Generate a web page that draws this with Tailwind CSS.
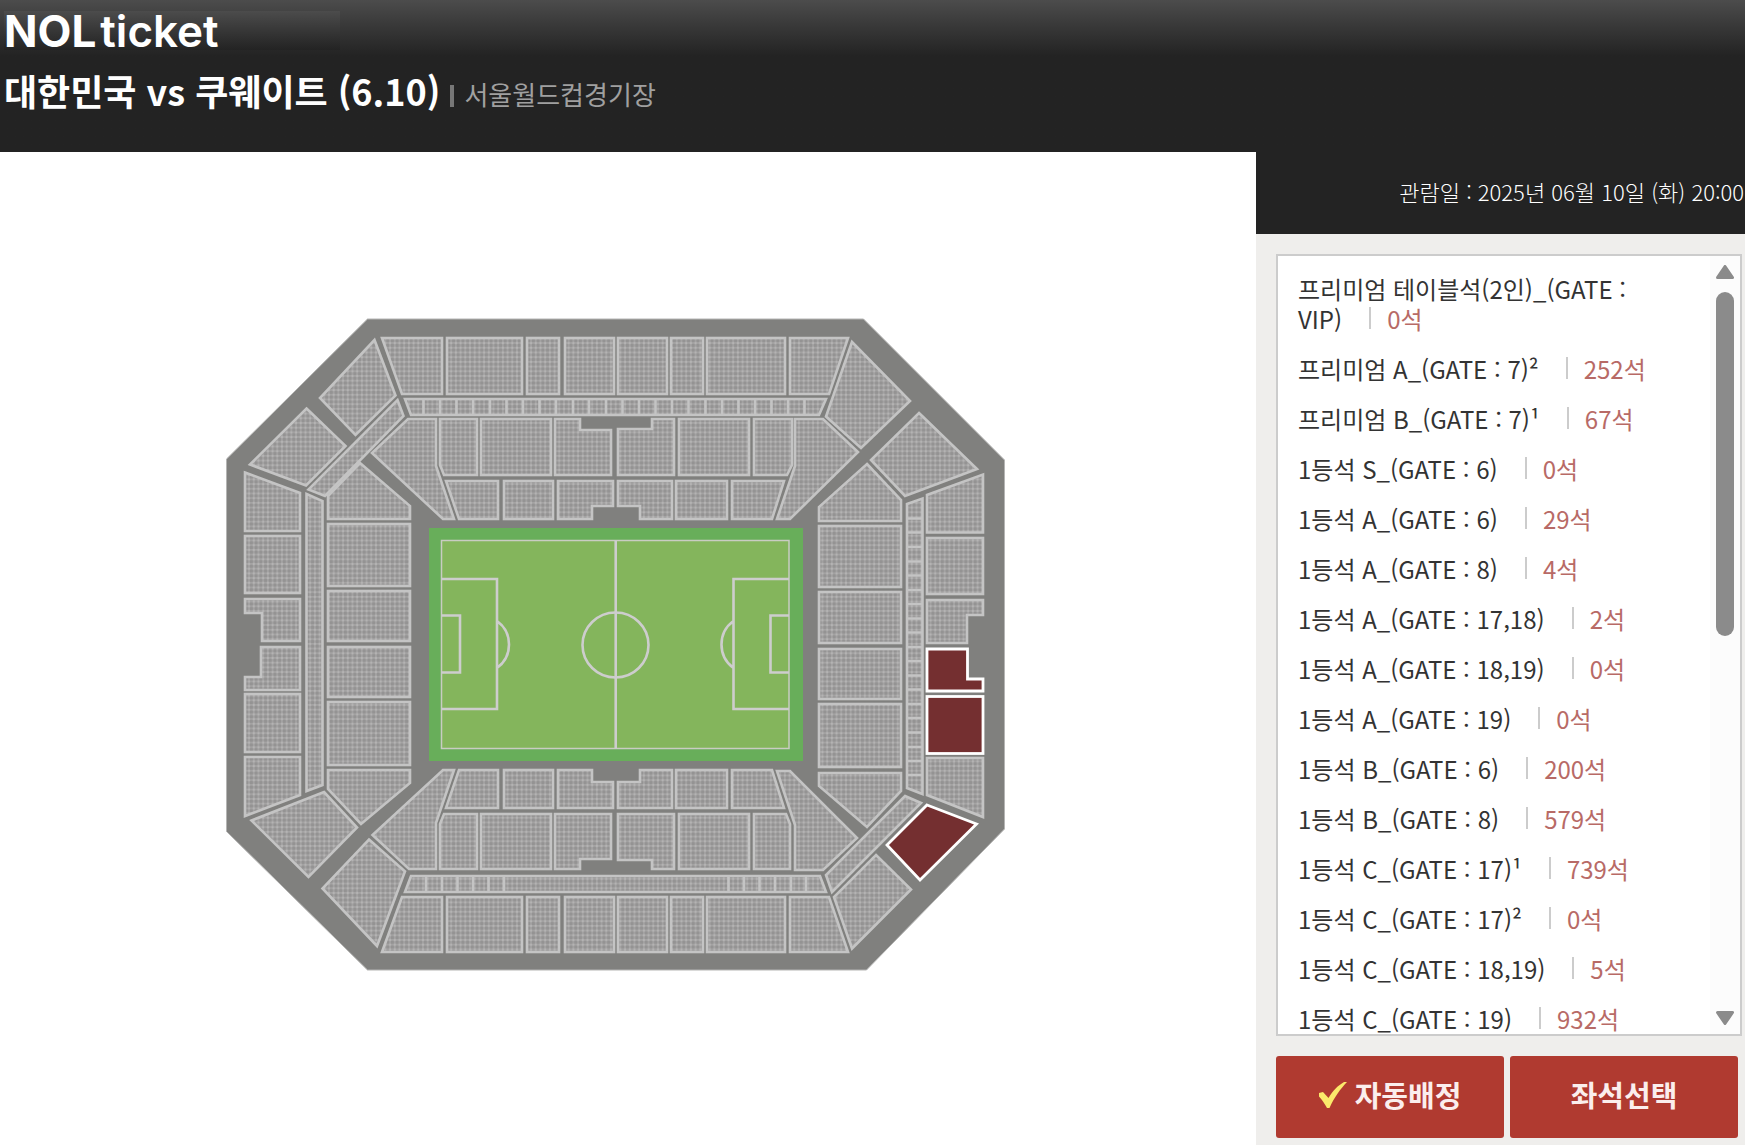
<!DOCTYPE html>
<html lang="ko">
<head>
    <meta charset="UTF-8">
    <meta name="viewport" content="width=device-width, initial-scale=1.0">
    <title>NOL ticket - 좌석 선택</title>
    <script src="https://cdn.jsdelivr.net/npm/@tailwindcss/browser@4"></script>
</head>
<body class="flex h-screen flex-col overflow-hidden bg-white font-['Noto_Sans_CJK_KR',sans-serif]">
    <header class="h-[152px] shrink-0 bg-[#232323] bg-linear-to-b from-[#4c4c4c] to-[#232323] to-[56px] px-1 pt-[11px] text-white">
        <a href="#" class="flex h-[39px] w-[336px] items-center gap-1 bg-linear-to-b from-[#4c4c4c] to-[#232323] font-['Inter',sans-serif] text-[44px] leading-none">
            <span class="font-bold">NOL</span><span class="font-semibold">ticket</span>
        </a>
        <div class="mt-[14px] flex items-center">
            <h1 class="text-[36px] leading-[52px] font-bold">대한민국 vs 쿠웨이트 (6.10)</h1>
            <span class="mt-3 ml-[10px] h-[22px] w-1 bg-[#777]"></span>
            <p class="mt-2 ml-[10px] text-[26px] leading-[40px] text-[#a0a0a0]">서울월드컵경기장</p>
        </div>
    </header>

    <div class="flex min-h-0 flex-1">
        <main class="min-w-0 flex-1">
            <svg class="h-full w-full" viewBox="0 152 1256 993" role="img" aria-label="서울월드컵경기장 좌석 배치도">
                <defs>
                    <pattern id="seats" width="4.7" height="4.7" patternUnits="userSpaceOnUse">
                        <rect width="4.7" height="4.7" fill="#a4a3a3" />
                        <rect x="0.8" y="0.8" width="3" height="3" rx="0.8" fill="#949393" />
                        <circle cx="0" cy="0" r="1.2" fill="#b4b3b3" />
                        <circle cx="4.7" cy="0" r="1.2" fill="#b4b3b3" />
                        <circle cx="0" cy="4.7" r="1.2" fill="#b4b3b3" />
                        <circle cx="4.7" cy="4.7" r="1.2" fill="#b4b3b3" />
                    </pattern>
                </defs>

                <polygon points="367.5,319 863.5,319 1004.5,460 1004.5,829 866.5,970 367.5,970 226.5,831.5 226.5,459" fill="#80807e" stroke="#b5b5b4" />

                <g fill="url(#seats)" stroke="#c4c4c4" stroke-width="2.6">
                    <!-- north stand, upper tier -->
                    <polygon points="382,338 442,338 442,394 402,394" />
                    <rect x="447" y="338" width="75" height="56" />
                    <rect x="527" y="338" width="32" height="56" />
                    <rect x="565" y="338" width="49" height="56" />
                    <rect x="618" y="338" width="49" height="56" />
                    <rect x="671" y="338" width="32" height="56" />
                    <rect x="707" y="338" width="78" height="56" />
                    <polygon points="790,338 848,338 829,394 790,394" />
                    <polygon points="405,399 826,399 819,415 411,415" />
                    <path d="M423.5 399v16M440 399v16M456.5 399v16M473 399v16M490 399v16M506.5 399v16M523 399v16M539.5 399v16M556 399v16M573 399v16M589 399v16M606 399v16M622.5 399v16M639 399v16M655.5 399v16M672 399v16M688.5 399v16M705.5 399v16M722 399v16M738.5 399v16M755 399v16M771.5 399v16M788 399v16M804.5 399v16" />

                    <!-- north stand, lower tier -->
                    <polygon points="408,419 436,419 436,466 454,519 443,519 372,453" />
                    <polygon points="440,419 477,419 477,475 444,475 440,465" />
                    <rect x="481" y="419" width="70" height="56" />
                    <polygon points="555,419 580,419 580,430 611,430 611,475 555,475" />
                    <polygon points="618,429 652,429 652,419 674,419 674,475 618,475" />
                    <rect x="679" y="419" width="70" height="56" />
                    <polygon points="754,419 792,419 792,465 787,475 754,475" />
                    <polygon points="795,419 823,419 858,452 790,519 777,519 795,466" />
                    <polygon points="446,481 498,481 498,519 459,519" />
                    <rect x="504" y="481" width="49" height="38" />
                    <polygon points="558,481 613,481 613,506 592,506 592,519 558,519" />
                    <polygon points="618,481 672,481 672,519 640,519 640,506 618,506" />
                    <rect x="676" y="481" width="51" height="38" />
                    <polygon points="732,481 784,481 772,519 732,519" />

                    <!-- west stand -->
                    <polygon points="374.5,340 395.5,395.5 355.5,435 320,398" />
                    <polygon points="306.5,408.5 345.5,446 306,485.5 250,464.5" />
                    <polygon points="397.5,400 403.5,416 325,496 308.5,489.5" />
                    <polygon points="360,463 410,506 410,519 328,519 328,496" />
                    <polygon points="245,472.5 300,493 300,531 245,531" />
                    <rect x="245" y="536" width="55" height="57" />
                    <polygon points="245,599 300,599 300,641 262,641 262,613 245,613" />
                    <polygon points="261,647 300,647 300,690 245,690 245,677 261,677" />
                    <rect x="245" y="694" width="55" height="58" />
                    <polygon points="245,757 300,757 300,795 245,816" />
                    <polygon points="306.5,494 322.5,501 322.5,785 306.5,791" />
                    <rect x="328" y="524" width="82" height="62" />
                    <rect x="328" y="591" width="82" height="50" />
                    <rect x="328" y="647" width="82" height="50" />
                    <rect x="328" y="702" width="82" height="63" />
                    <polygon points="328,770 410,770 410,783 361,824 328,789" />
                    <polygon points="324,792 357,827.5 308.5,877 251.5,820.5" />
                    <polygon points="369,839.5 405,871.5 377,946 322.5,888.5" />

                    <!-- south stand, lower tier -->
                    <polygon points="443,770 454,770 436,823 436,869 409,869 372.5,835" />
                    <polygon points="459,770 498,770 498,808 446,808" />
                    <rect x="504" y="770" width="49" height="38" />
                    <polygon points="558,770 592,770 592,782 613,782 613,808 558,808" />
                    <polygon points="640,770 672,770 672,808 618,808 618,782 640,782" />
                    <rect x="676" y="770" width="51" height="38" />
                    <polygon points="732,770 772,770 784,808 732,808" />
                    <polygon points="444,814 477,814 477,869 440,869 440,824" />
                    <rect x="481" y="814" width="70" height="55" />
                    <polygon points="555,814 611,814 611,859 580,859 580,869 555,869" />
                    <polygon points="618,814 674,814 674,869 652,869 652,860 618,860" />
                    <rect x="679" y="814" width="70" height="55" />
                    <polygon points="754,814 786,814 790,824 790,869 754,869" />
                    <polygon points="777,771 790,771 857,838 823,870 795,870 795,825" />

                    <!-- south stand, upper tier -->
                    <polygon points="411,876 820,876 826,892 405,892" />
                    <path d="M426 876v16M442 876v16M457.5 876v16M473 876v16M488.5 876v16M504 876v16M728.5 876v16M744 876v16M759.5 876v16M775 876v16M791 876v16M806 876v16" />
                    <polygon points="402,897 442,897 442,952 382,952" />
                    <rect x="447" y="897" width="75" height="55" />
                    <rect x="527" y="897" width="32" height="55" />
                    <rect x="565" y="897" width="49" height="55" />
                    <rect x="618" y="897" width="49" height="55" />
                    <rect x="671" y="897" width="32" height="55" />
                    <rect x="707" y="897" width="78" height="55" />
                    <polygon points="790,897 829,897 848,952 790,952" />

                    <!-- east stand -->
                    <polygon points="852,342 910,401 861,448 826,416.5" />
                    <polygon points="919,413 977,469 905,496 871,460" />
                    <polygon points="867,464 901,500 901,521 819,521 819,507" />
                    <rect x="819" y="526" width="82" height="61" />
                    <rect x="819" y="592" width="82" height="51" />
                    <rect x="819" y="649" width="82" height="50" />
                    <rect x="819" y="704" width="82" height="63" />
                    <polygon points="819,773 901,773 901,791 867,827 819,786" />
                    <polygon points="907,504 922.5,498.5 922.5,794 907,788" />
                    <path d="M907 518.5h15M907 532.5h15M907 547h15M907 561.5h15M907 575.5h15M907 590h15M907 604h15M907 618.5h15M907 632.5h15M907 647h15M907 661h15M907 675.5h15M907 689.5h15M907 704h15M907 718h15M907 732.5h15M907 747h15M907 761h15M907 775h15" />
                    <polygon points="983,474.5 983,532.5 927,532.5 927,495" />
                    <rect x="927" y="538" width="56" height="56" />
                    <polygon points="927,600 983,600 983,615 967,615 967,643 927,643" />
                    <polygon points="927,758 983,758 983,817 927,795" />
                    <polygon points="905,796 921,803 832,892 826,875" />
                    <polygon points="876,855 911,889.5 852,948.5 834,897" />
                </g>

                <!-- zones that can be booked -->
                <g fill="#742f30" stroke="#fff" stroke-width="2.8">
                    <polygon points="927,649 967.5,649 967.5,679 983,679 983,691 927,691" />
                    <rect x="927" y="696.5" width="56" height="57" />
                    <polygon points="927,805 976.5,824 920,880 887,845" />
                </g>

                <!-- pitch -->
                <rect x="429" y="528" width="374" height="233" fill="#68ae5a" />
                <rect x="441.5" y="540.5" width="347.5" height="208" fill="#84b55c" stroke="#c9ccc2" stroke-width="1.5" />
                <g fill="none" stroke="#cdcdcd" stroke-width="2.6">
                    <path d="M615.7 540.5v208" />
                    <ellipse cx="615.5" cy="645" rx="33" ry="32.5" />
                    <path d="M441.5 579h55.500v130h-55.500M441.5 615.500h18.500v57h-18.500M497 621a29 29 0 0 1 0 47" />
                    <path d="M789 579h-55.500v130h55.500M789 615.500h-18.500v57h18.500M733.500 621a29 29 0 0 0 0 47" />
                </g>
            </svg>
        </main>

        <aside class="flex w-[489px] shrink-0 flex-col bg-[#efeeec]">
            <p class="h-[82px] shrink-0 bg-[#232323] pr-px text-right text-[22px] leading-[78px] font-light text-white">관람일 : 2025년 06월 10일 (화) 20:00</p>

            <div class="mt-5 mr-[3px] ml-5 flex min-h-0 flex-1 border-2 border-[#ccc] bg-white">
                <ul id="seat-list" class="min-w-0 flex-1 space-y-5 overflow-y-auto pt-[18px] pr-[50px] pl-5 text-[24px] leading-[30px] text-[#333] [scrollbar-width:none]">
                    <li><a href="#">프리미엄 테이블석(2인)_(GATE : VIP)<span class="mr-4 ml-[27px] inline-block h-[22px] w-0.5 bg-[#ccc]"></span><span class="text-[#b86a66]">0석</span></a></li>
                    <li><a href="#">프리미엄 A_(GATE : 7)²<span class="mr-4 ml-[27px] inline-block h-[22px] w-0.5 bg-[#ccc]"></span><span class="text-[#b86a66]">252석</span></a></li>
                    <li><a href="#">프리미엄 B_(GATE : 7)¹<span class="mr-4 ml-[27px] inline-block h-[22px] w-0.5 bg-[#ccc]"></span><span class="text-[#b86a66]">67석</span></a></li>
                    <li><a href="#">1등석 S_(GATE : 6)<span class="mr-4 ml-[27px] inline-block h-[22px] w-0.5 bg-[#ccc]"></span><span class="text-[#b86a66]">0석</span></a></li>
                    <li><a href="#">1등석 A_(GATE : 6)<span class="mr-4 ml-[27px] inline-block h-[22px] w-0.5 bg-[#ccc]"></span><span class="text-[#b86a66]">29석</span></a></li>
                    <li><a href="#">1등석 A_(GATE : 8)<span class="mr-4 ml-[27px] inline-block h-[22px] w-0.5 bg-[#ccc]"></span><span class="text-[#b86a66]">4석</span></a></li>
                    <li><a href="#">1등석 A_(GATE : 17,18)<span class="mr-4 ml-[27px] inline-block h-[22px] w-0.5 bg-[#ccc]"></span><span class="text-[#b86a66]">2석</span></a></li>
                    <li><a href="#">1등석 A_(GATE : 18,19)<span class="mr-4 ml-[27px] inline-block h-[22px] w-0.5 bg-[#ccc]"></span><span class="text-[#b86a66]">0석</span></a></li>
                    <li><a href="#">1등석 A_(GATE : 19)<span class="mr-4 ml-[27px] inline-block h-[22px] w-0.5 bg-[#ccc]"></span><span class="text-[#b86a66]">0석</span></a></li>
                    <li><a href="#">1등석 B_(GATE : 6)<span class="mr-4 ml-[27px] inline-block h-[22px] w-0.5 bg-[#ccc]"></span><span class="text-[#b86a66]">200석</span></a></li>
                    <li><a href="#">1등석 B_(GATE : 8)<span class="mr-4 ml-[27px] inline-block h-[22px] w-0.5 bg-[#ccc]"></span><span class="text-[#b86a66]">579석</span></a></li>
                    <li><a href="#">1등석 C_(GATE : 17)¹<span class="mr-4 ml-[27px] inline-block h-[22px] w-0.5 bg-[#ccc]"></span><span class="text-[#b86a66]">739석</span></a></li>
                    <li><a href="#">1등석 C_(GATE : 17)²<span class="mr-4 ml-[27px] inline-block h-[22px] w-0.5 bg-[#ccc]"></span><span class="text-[#b86a66]">0석</span></a></li>
                    <li><a href="#">1등석 C_(GATE : 18,19)<span class="mr-4 ml-[27px] inline-block h-[22px] w-0.5 bg-[#ccc]"></span><span class="text-[#b86a66]">5석</span></a></li>
                    <li><a href="#">1등석 C_(GATE : 19)<span class="mr-4 ml-[27px] inline-block h-[22px] w-0.5 bg-[#ccc]"></span><span class="text-[#b86a66]">932석</span></a></li>
                </ul>
                <div class="flex w-[30px] shrink-0 flex-col items-center bg-[#fcfcfc] py-[9px]">
                    <svg class="h-[14px] w-[18px]" viewBox="0 0 18 14" fill="#8b8b8b" stroke="#8b8b8b" stroke-width="3" stroke-linejoin="round"><path d="M9 1.500L16.500 12.500H1.500z" /></svg>
                    <div class="mt-[13px] h-[344px] w-[18px] rounded-full bg-[#8b8b8b]"></div>
                    <svg class="mt-auto h-[14px] w-[18px]" viewBox="0 0 18 14" fill="#8b8b8b" stroke="#8b8b8b" stroke-width="3" stroke-linejoin="round"><path d="M9 12.500L16.500 1.500H1.500z" /></svg>
                </div>
            </div>

            <div class="mt-5 mr-[7px] mb-[7px] ml-5 grid h-[82px] shrink-0 grid-cols-2 gap-[6px] text-[29px] font-bold text-[#fbeeed]">
                <button type="button" class="flex items-center justify-center gap-2 rounded-[3px] bg-[#b03a30] pb-1">
                    <svg class="h-[26px] w-[28px]" viewBox="0 0 28 26" fill="#fbe96b"><path d="M0 11L4 10L9.500 16C14 8.500 19 3.500 25 0H28C21 7.500 15.500 15 10.500 26H8C5.500 21.500 3 17.500 0 14.500z" /></svg>
                    자동배정
                </button>
                <button type="button" class="flex items-center justify-center rounded-[3px] bg-[#b03a30] pb-1">좌석선택</button>
            </div>
        </aside>
    </div>
</body>
</html>
